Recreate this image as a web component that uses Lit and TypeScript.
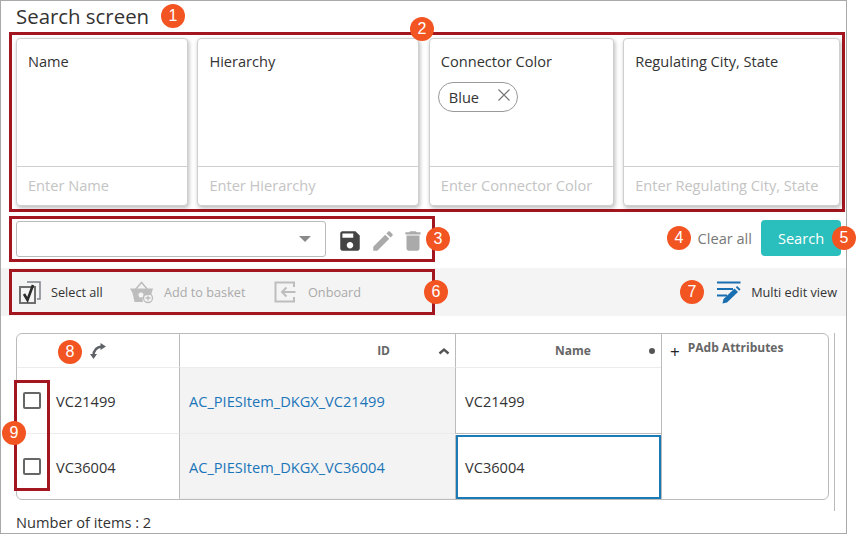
import { LitElement, html, css, svg } from 'lit';
import { customElement } from 'lit/decorators.js';

const filters = [
  { label: 'Name', placeholder: 'Enter Name', chip: '' },
  { label: 'Hierarchy', placeholder: 'Enter Hierarchy', chip: '' },
  { label: 'Connector Color', placeholder: 'Enter Connector Color', chip: 'Blue' },
  { label: 'Regulating City, State', placeholder: 'Enter Regulating City, State', chip: '' },
];

const rows = [
  { code: 'VC21499', id: 'AC_PIESItem_DKGX_VC21499', selected: false },
  { code: 'VC36004', id: 'AC_PIESItem_DKGX_VC36004', selected: true },
];

const icon = (size: number, color: string, d: string) => html`
  <svg width=${size} height=${size} viewBox="0 0 24 24" fill=${color}>${svg`<path d=${d}></path>`}</svg>
`;

@customElement('app-root')
export class AppRoot extends LitElement {
  static styles = css`
    :host {
      display: block;
      width: 847px;
      height: 534px;
      font-family: 'Open Sans', 'Noto Sans', sans-serif;
      font-size: 14.6px;
      color: #333;
    }
    * {
      box-sizing: border-box;
    }
    .frame {
      position: relative;
      height: 534px;
      border: 1px solid #a9a9a9;
    }
    .title {
      height: 31px;
      padding-left: 15px;
      font-size: 20.4px;
      line-height: 30px;
    }
    .filters {
      display: grid;
      grid-template-columns: 172px 222px 185px 217px;
      column-gap: 9.4px;
      width: 836px;
      height: 180px;
      margin-left: 8px;
      padding: 3px 0 3px 4px;
      border: 3px solid #a3161f;
    }
    .card {
      display: flex;
      flex-direction: column;
      border: 1px solid #cfcfcf;
      border-radius: 4px;
      background: #fff;
      box-shadow: 1px 2px 4px rgba(0, 0, 0, 0.28);
    }
    .card-body {
      flex: 1;
      padding: 13px 11px 0;
    }
    .card-label {
      line-height: 19px;
    }
    .chip {
      display: flex;
      align-items: center;
      justify-content: space-between;
      width: 80px;
      height: 30px;
      margin: 11px 0 0 -3px;
      padding: 0 5px 0 10px;
      border: 1px solid #999;
      border-radius: 15px;
    }
    .chip svg {
      margin-bottom: 4px;
    }
    .card-input {
      height: 39px;
      padding: 0 11px;
      border-top: 1px solid #cfcfcf;
      color: #c4c4c4;
      line-height: 37px;
      white-space: nowrap;
    }
    .search-row {
      display: flex;
      align-items: flex-start;
      justify-content: space-between;
      margin: 4px 5px 0 8px;
    }
    .saved {
      display: flex;
      align-items: center;
      width: 426px;
      height: 46px;
      padding-left: 4px;
      border: 3px solid #a3161f;
    }
    .combo {
      display: flex;
      flex: none;
      align-items: center;
      justify-content: flex-end;
      width: 310px;
      height: 36px;
      margin-right: 11px;
      padding-right: 14px;
      border: 1px solid #bbb;
      border-radius: 3px;
    }
    .caret {
      width: 0;
      height: 0;
      border-left: 6px solid transparent;
      border-right: 6px solid transparent;
      border-top: 6px solid #8a8a8a;
    }
    .saved svg {
      display: block;
      flex: none;
      margin-top: 3px;
      margin-right: 7px;
    }
    .saved svg:nth-of-type(2) {
      margin-right: 4px;
    }
    .search-actions {
      display: flex;
      align-items: center;
      gap: 9px;
      height: 36px;
      margin-top: 4px;
    }
    .clear {
      color: #777;
    }
    .search-btn {
      width: 80px;
      height: 36px;
      border-radius: 4px;
      background: #2abfbc;
      color: #fff;
      text-align: center;
      line-height: 36px;
    }
    .band {
      display: flex;
      align-items: center;
      justify-content: space-between;
      height: 48px;
      margin-top: 6px;
      padding: 0 9px 0 8px;
      background: #f4f4f4;
      font-size: 12.7px;
    }
    .actions {
      display: flex;
      align-items: center;
      width: 426px;
      height: 46px;
      padding-left: 7px;
      border: 3px solid #a3161f;
    }
    .action {
      display: flex;
      align-items: center;
      color: #aaa;
    }
    .action svg {
      display: block;
      flex: none;
    }
    .select-all {
      width: 111px;
      gap: 9px;
      color: #333;
    }
    .basket {
      width: 144px;
      gap: 10px;
    }
    .onboard {
      gap: 12px;
    }
    .multi {
      display: flex;
      align-items: center;
      gap: 10px;
    }
    .table-wrap {
      display: flex;
      gap: 5px;
      height: 178px;
      margin: 17px 0 0 15px;
    }
    .grid {
      display: grid;
      grid-template-columns: 162px 276px 206px 1fr;
      grid-template-rows: 34px 66px 65px;
      width: 813px;
      height: 167px;
      border: 1px solid #bbb;
      border-radius: 6px;
      overflow: hidden;
    }
    .scroll-line {
      width: 1px;
      background: #bbb;
    }
    .cell {
      display: flex;
      align-items: center;
      min-width: 0;
      white-space: nowrap;
    }
    .head {
      border-bottom: 1px solid #ececec;
      color: #666;
      font-size: 12px;
      font-weight: 700;
    }
    .head-code {
      padding-left: 72px;
    }
    .head-id {
      justify-content: flex-end;
      padding-right: 5px;
      gap: 48px;
      border-left: 1px solid #bbb;
    }
    .head-name {
      border-left: 1px solid #bbb;
      padding: 0 6px 0 99px;
      justify-content: space-between;
    }
    .dot {
      width: 6px;
      height: 6px;
      border-radius: 50%;
      background: #555;
    }
    .attrs {
      grid-column: 4;
      grid-row: 1 / span 3;
      align-items: flex-start;
      gap: 8px;
      padding: 5px 0 0 8px;
      border-left: 1px solid #bbb;
      color: #666;
      font-size: 12px;
      font-weight: 700;
    }
    .plus {
      margin-top: 6px;
      color: #222;
      font-size: 17px;
      font-weight: 400;
      line-height: 14px;
    }
    .code-cell {
      gap: 15px;
      padding-left: 6px;
      border-bottom: 1px solid #ececec;
    }
    .row-last {
      border-bottom: 0;
    }
    .check {
      width: 18px;
      height: 17px;
      border: 2px solid #666;
      border-radius: 2px;
      background: #fff;
    }
    .id-cell {
      padding-left: 9px;
      border-left: 1px solid #bbb;
      border-bottom: 1px solid #ececec;
      background: #f3f3f3;
      color: #1a75b8;
    }
    .id-cell.row-last {
      padding-top: 2px;
    }
    .name-cell {
      padding-left: 9px;
      border-left: 1px solid #bbb;
      border-bottom: 1px solid #bbb;
    }
    .name-selected {
      margin-top: 1px;
      border-bottom: 0;
      box-shadow: inset 0 0 0 2px #1a7ab5;
    }
    .count {
      padding-left: 15px;
      line-height: 22px;
    }
    .row-box {
      position: absolute;
      left: 13px;
      top: 379px;
      width: 36px;
      height: 111px;
      border: 3px solid #a3161f;
    }
    .badge {
      position: absolute;
      width: 24px;
      height: 24px;
      border-radius: 50%;
      background: #f25522;
      color: #fff;
      font-family: 'Liberation Sans', sans-serif;
      font-size: 16px;
      line-height: 24px;
      text-align: center;
    }
    .b1 { left: 160px; top: 3px; }
    .b2 { left: 409px; top: 16px; }
    .b3 { left: 425px; top: 226px; }
    .b4 { left: 666px; top: 225px; }
    .b5 { left: 831px; top: 225px; }
    .b6 { left: 423px; top: 279px; }
    .b7 { left: 679px; top: 279px; }
    .b8 { left: 57px; top: 339px; }
    .b9 { left: 1px; top: 420px; }
  `;

  renderCard(f: { label: string; placeholder: string; chip: string }) {
    return html`
      <div class="card">
        <div class="card-body">
          <div class="card-label">${f.label}</div>
          ${f.chip
            ? html`<div class="chip">
                <span>${f.chip}</span>
                <svg width="16" height="16" viewBox="0 0 16 16" stroke="#777" stroke-width="1.2" fill="none">
                  <path d="M2.500 2.500 13.500 13.500M13.500 2.500 2.500 13.500"></path>
                </svg>
              </div>`
            : ''}
        </div>
        <div class="card-input">${f.placeholder}</div>
      </div>
    `;
  }

  renderGrid() {
    return html`
      <div class="grid">
        <div class="cell head head-code">
          <svg width="18" height="18" viewBox="0 0 18 18" fill="none">
            <path d="M4.500 14C4.500 8.500 7.500 5 13 4.500" stroke="#5f6368" stroke-width="2.4"></path>
            <path d="M11.500 1 17 4.500 11.500 8Z" fill="#5f6368"></path>
            <path d="M1 12 8 12 4.500 17Z" fill="#5f6368"></path>
          </svg>
        </div>
        <div class="cell head head-id">
          <span>ID</span>
          <svg width="12" height="8" viewBox="0 0 12 8" fill="none" stroke="#555" stroke-width="2.4">
            <path d="M1.500 6.500 6 2.500 10.500 6.500"></path>
          </svg>
        </div>
        <div class="cell head head-name"><span>Name</span><span class="dot"></span></div>
        <div class="cell attrs"><span class="plus">+</span><span>PAdb Attributes</span></div>
        ${rows.map(
          (r, i) => html`
            <div class="cell code-cell ${i === rows.length - 1 ? 'row-last' : ''}">
              <span class="check"></span><span>${r.code}</span>
            </div>
            <div class="cell id-cell ${i === rows.length - 1 ? 'row-last' : ''}">${r.id}</div>
            <div class="cell name-cell ${r.selected ? 'name-selected' : ''}">${r.code}</div>
          `
        )}
      </div>
    `;
  }

  render() {
    return html`
      <div class="frame">
        <div class="title">Search screen</div>
        <div class="filters">${filters.map((f) => this.renderCard(f))}</div>

        <div class="search-row">
          <div class="saved">
            <div class="combo"><span class="caret"></span></div>
            ${icon(26, '#444', 'M17 3H5c-1.11 0-2 .9-2 2v14c0 1.1.89 2 2 2h14c1.1 0 2-.9 2-2V7l-4-4zm-5 16c-1.66 0-3-1.34-3-3s1.34-3 3-3 3 1.34 3 3-1.34 3-3 3zm3-10H5V5h10v4z')}
            ${icon(26, '#aaa', 'M3 17.25V21h3.75L17.81 9.94l-3.75-3.75L3 17.25zM20.71 7.04c.39-.39.39-1.02 0-1.41l-2.34-2.34c-.39-.39-1.02-.39-1.41 0l-1.83 1.83 3.75 3.75 1.83-1.83z')}
            ${icon(26, '#aaa', 'M6 19c0 1.1.9 2 2 2h8c1.1 0 2-.9 2-2V7H6v12zM19 4h-3.5l-1-1h-5l-1 1H5v2h14V4z')}
          </div>
          <div class="search-actions">
            <span class="clear">Clear all</span>
            <div class="search-btn">Search</div>
          </div>
        </div>

        <div class="band">
          <div class="actions">
            <div class="action select-all">
              <svg width="23" height="23" viewBox="0 0 23 23" fill="none">
                <path d="M8 1H21V18H18" stroke="#7d828a" stroke-width="1.500"></path>
                <rect x="1" y="6" width="15" height="16" stroke="#6f6f6f" stroke-width="2" fill="#f4f4f4"></rect>
                <path d="M5 13 8.500 19 14 4" stroke="#2b2b2b" stroke-width="2.600"></path>
              </svg>
              <span>Select all</span>
            </div>
            <div class="action basket">
              <svg width="24" height="23" viewBox="0 0 24 23" fill="none">
                <path d="M5 9 11.500 1.500 18 9" stroke="#bdbdbd" stroke-width="1.500"></path>
                <path d="M0 7.500H23L21 14H18A5 5 0 0 0 13 21H4.500L2.500 12Z" fill="#bdbdbd"></path>
                <circle cx="11" cy="14" r="2.500" fill="#f4f4f4"></circle>
                <circle cx="18" cy="17" r="4.500" stroke="#bdbdbd" stroke-width="1.300"></circle>
                <path d="M18 14.500V19.500M15.500 17H20.500" stroke="#bdbdbd" stroke-width="1.300"></path>
              </svg>
              <span>Add to basket</span>
            </div>
            <div class="action onboard">
              <svg width="22" height="22" viewBox="0 0 22 22" fill="none" stroke="#bdbdbd" stroke-width="2">
                <path d="M20 6V1.500H1.500V20.500H20V16"></path>
                <path d="M21.500 11H8M12.500 6.500 8 11 12.500 15.500"></path>
              </svg>
              <span>Onboard</span>
            </div>
          </div>
          <div class="multi">
            <svg width="24" height="23" viewBox="0 0 24 23" fill="none">
              <path d="M0 1.500H23.500M0 8H16M0 14.500H10" stroke="#1a6fb0" stroke-width="2"></path>
              <path d="M5.500 22.500 6.500 18 17.500 7.500 21 11 10 21.500Z" fill="#1a6fb0"></path>
              <path d="M18.800 6.200 20.200 5 23.500 8.200 22.200 9.700Z" fill="#1a6fb0"></path>
            </svg>
            <span>Multi edit view</span>
          </div>
        </div>

        <div class="table-wrap">
          ${this.renderGrid()}
          <div class="scroll-line"></div>
        </div>
        <div class="count">Number of items : 2</div>

        <div class="row-box"></div>
        ${[1, 2, 3, 4, 5, 6, 7, 8, 9].map((n) => html`<span class="badge b${n}">${n}</span>`)}
      </div>
    `;
  }
}
